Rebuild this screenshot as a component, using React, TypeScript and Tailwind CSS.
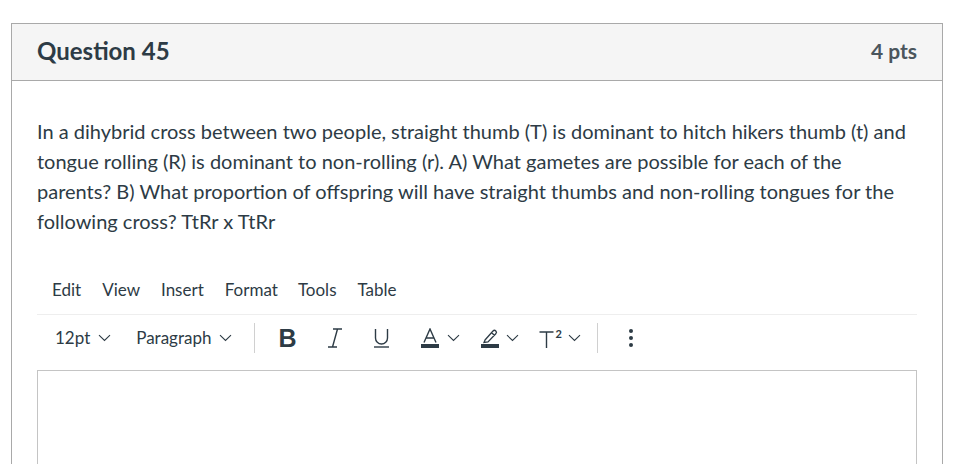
import React from "react";

const Chev = () => (
  <svg width="13" height="8" viewBox="0 0 13 8" fill="none" stroke="#2d3b45" strokeWidth="1.1">
    <path d="M1 1.2 L6.5 6.5 L12 1.2" />
  </svg>
);

export default function App() {
  return (
    <div className="w-[976px] h-[464px] bg-white overflow-hidden pt-[23px] pl-[11px]" style={{ fontFamily: "Lato, 'Noto Sans', sans-serif" }}>
      <div className="w-[932px] h-[600px] border border-[#a9a9a9] text-[#2d3b45]">
        <div className="h-[57px] bg-[#f5f5f5] border-b border-[#a9a9a9] flex items-center justify-between pl-[25px] pr-[25px]">
          <div className="text-[24px] font-bold leading-none -mt-[3px]">Question 45</div>
          <div className="text-[21px] font-bold leading-none text-[#4b565d] -mt-[3px]">4 pts</div>
        </div>
        <div className="px-[25px] pt-[35px]">
          <p className="text-[20px] leading-[30px] text-[#2d3b45]">
            In a dihybrid cross between two people, straight thumb (T) is dominant to hitch hikers thumb (t) and tongue rolling (R) is dominant to non-rolling (r). A) What gametes are possible for each of the parents? B) What proportion of offspring will have straight thumbs and non-rolling tongues for the following cross? TtRr x TtRr
          </p>
          <div className="mt-[38px] flex items-center h-[32px] pl-[15px] text-[17px] text-[#2d3b45]">
            <span>Edit</span>
            <span className="ml-[21px]">View</span>
            <span className="ml-[21px]">Insert</span>
            <span className="ml-[21px]">Format</span>
            <span className="ml-[20px]">Tools</span>
            <span className="ml-[21px]">Table</span>
          </div>
          <div className="h-px bg-[#eeeeee] mt-[8px]" />
          <div className="flex items-center h-[46px] text-[17px] text-[#2d3b45]">
            <div className="flex items-center gap-[8px] ml-[18px]">
              <span>12pt</span>
              <Chev />
            </div>
            <div className="flex items-center gap-[8px] ml-[25px]">
              <span>Paragraph</span>
              <Chev />
            </div>
            <div className="w-px h-[30px] bg-[#d0d0d0] ml-[22px]" />
            <span className="ml-[23px] w-[18px] text-[25px] font-bold leading-none flex justify-center" style={{ fontFamily: "'Liberation Sans', Arial, sans-serif" }}>B</span>
            <svg className="ml-[32px]" width="14" height="20" viewBox="0 0 14 20" fill="none" stroke="#2d3b45" strokeWidth="1.4">
              <path d="M5 1 H14 M0 19 H9 M9.5 1 L4.5 19" />
            </svg>
            <svg className="ml-[31px]" width="17" height="20" viewBox="0 0 17 20" fill="none" stroke="#2d3b45" strokeWidth="1.4">
              <path d="M2.5 1 V10 A6 6 0 0 0 14.5 10 V1" />
              <path d="M1 19 H16" />
            </svg>
            <svg className="ml-[31px]" width="18" height="20" viewBox="0 0 18 20" fill="none">
              <path d="M3 14.5 L9 1 L15 14.5 M5.2 10 H12.8" stroke="#2d3b45" strokeWidth="1.4" />
              <rect x="0" y="16" width="18" height="4" fill="#2d3b45" />
            </svg>
            <span className="ml-[8px]"><Chev /></span>
            <svg className="ml-[21px]" width="18" height="20" viewBox="0 0 18 20" fill="none">
              <path d="M4 12 L12 3 A1.8 1.8 0 0 1 14.8 5.8 L7 14 L3 14.5 Z M10.5 4.5 L13.5 7.5" stroke="#2d3b45" strokeWidth="1.3" />
              <rect x="0" y="16" width="18" height="4" fill="#2d3b45" />
            </svg>
            <span className="ml-[7px]"><Chev /></span>
            <span className="ml-[20px] flex items-start leading-none">
              <svg width="15" height="19" viewBox="0 0 15 19" fill="none" stroke="#2d3b45" strokeWidth="1.4">
                <path d="M0.5 3 H14.5 M7.5 3 V19" />
              </svg>
              <span className="text-[11px] font-bold -mt-[1px] ml-[1px]">2</span>
            </span>
            <span className="ml-[6px]"><Chev /></span>
            <div className="w-px h-[30px] bg-[#d0d0d0] ml-[16px]" />
            <svg className="ml-[30px]" width="6" height="20" viewBox="0 0 6 20" fill="#2d3b45">
              <circle cx="3" cy="3" r="2" />
              <circle cx="3" cy="10" r="2" />
              <circle cx="3" cy="17" r="2" />
            </svg>
          </div>
          <div className="mt-[9px] h-[200px] border border-[#c4c4c4]" />
        </div>
      </div>
    </div>
  );
}
